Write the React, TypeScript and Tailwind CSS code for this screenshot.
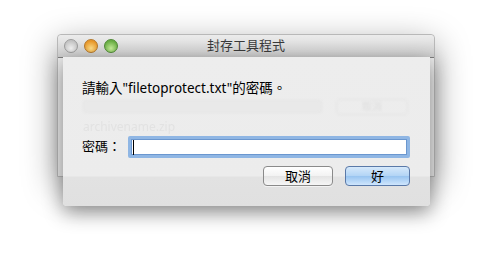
import React from "react";

const FONT = {
  fontFamily: '"Lucida Grande", "Noto Sans", "Noto Sans CJK TC", sans-serif',
};

function TrafficLight({ tone }: { tone: "gray" | "orange" | "green" }) {
  const cls =
    tone === "gray"
      ? "bg-[radial-gradient(circle_at_50%_70%,#f4f4f4,#c4c4c4_70%)] border-[#9c9c9c]"
      : tone === "orange"
      ? "bg-[radial-gradient(circle_at_50%_70%,#ffe08a,#e8982a_70%)] border-[#b5782a]"
      : "bg-[radial-gradient(circle_at_50%_70%,#c8f09a,#6aae44_70%)] border-[#4f8a35]";
  return <span className={`block w-[14px] h-[14px] rounded-full border ${cls}`} />;
}

export default function App() {
  return (
    <div className="w-[492px] h-[256px] bg-white pl-[57px] pt-[34px] text-[13px]" style={FONT}>
      <div className="relative w-[378px] h-[143px] rounded-t-[4px] bg-[#ececec] border border-[#b8b8b8] shadow-[0_10px_34px_rgba(0,0,0,0.4)]">
        {/* title bar */}
        <div className="h-[23px] rounded-t-[4px] bg-[linear-gradient(#ececec,#cdcdcd)] border-b border-[#7e7e7e] flex items-center px-[6px] relative">
          <div className="flex items-center gap-[6px]">
            <TrafficLight tone="gray" />
            <TrafficLight tone="orange" />
            <TrafficLight tone="green" />
          </div>
          <div className="absolute inset-0 flex items-center justify-center text-[#3a3a3a] text-[13px]">
            封存工具程式
          </div>
        </div>

        {/* sheet */}
        <div className="absolute left-[5px] top-[22px] w-[367px] h-[149px] rounded-b-[4px] bg-[linear-gradient(#ededed_0px,#ececec_119px,#e2e2e2_120px,#e0e0e0_149px)] shadow-[0_6px_20px_rgba(0,0,0,0.45)] px-[19px] flex flex-col">
          <p className="mt-[23px] h-[16px] leading-[16px] text-black text-[13.5px]">
            請輸入"filetoprotect.txt"的密碼。
          </p>

          {/* blurred content of the window below */}
          <div className="mt-[3px] h-[15px] flex items-center blur-[0.8px]">
            <div className="ml-[1px] w-[239px] h-[13px] rounded-[3px] bg-[#e9e9e9] border border-[#e4e4e4]" />
            <div className="ml-[14px] w-[72px] h-[16px] rounded-[4px] border border-[#e4e4e4] flex items-center justify-center text-[10px] text-[#dedede]">
              取消
            </div>
          </div>
          <div className="mt-[6px] h-[14px] leading-[14px] pl-[1px] text-[12px] text-[#e2e2e2] blur-[0.7px]">
            archivename.zip
          </div>

          <div className="mt-[2px] h-[22px] flex items-center">
            <span className="w-[46px] text-black">密碼：</span>
            <div className="w-[282px] h-[22px] rounded-[2px] bg-white border-[3px] border-[#8fb6e4] shadow-[inset_0_0_0_1px_#6b97cf] flex items-center pl-[2px]">
              <span className="block w-[1px] h-[15px] bg-black" />
            </div>
          </div>

          <div className="mt-[8px] flex justify-end gap-[12px] pr-[1px]">
            <button className="w-[70px] h-[20px] rounded-[4px] border border-[#8a8a8a] bg-[linear-gradient(#ffffff,#f2f2f2_50%,#e4e4e4_51%,#f6f6f6)] text-black text-[13px] leading-[18px] shadow-[0_1px_0_rgba(255,255,255,0.6)]">
              取消
            </button>
            <button className="w-[65px] h-[20px] rounded-[4px] border border-[#5a79a8] bg-[linear-gradient(#d6e9fb,#b2d4f5_50%,#98c4f0_51%,#cfe6fd)] text-black text-[13px] leading-[18px]">
              好
            </button>
          </div>
        </div>
      </div>
    </div>
  );
}
